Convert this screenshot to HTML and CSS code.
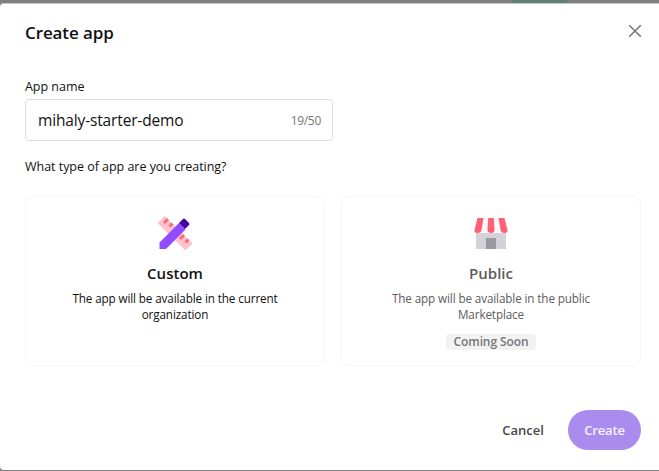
FILE: index.html
```html
<!DOCTYPE html>
<html lang="en">
<head>
<meta charset="utf-8">
<title>Create app</title>
<link rel="stylesheet" href="styles.css">
</head>
<body>
<div class="backdrop"><div class="backdrop-button"></div></div>
<main class="modal">
  <header class="modal-header">
    <h1 class="title">Create app</h1>
    <button class="close" aria-label="Close">
      <svg width="14" height="14" viewBox="0 0 14 14"><path d="M1.200 1.200l11.600 11.600M12.800 1.200L1.200 12.800" stroke="#777" stroke-width="1.6" fill="none"/></svg>
    </button>
  </header>
  <label class="label name-label">App name</label>
  <div class="field">
    <span class="value">mihaly-starter-demo</span>
    <span class="count">19/50</span>
  </div>
  <p class="label question">What type of app are you creating?</p>
  <div class="cards">
    <section class="card">
      <svg class="icon" width="36" height="36" viewBox="0 0 36 36">
        <path d="M0.500 8L7.500 1L35.500 28.500L28.500 35.500Z" fill="#ffc4cb"/>
        <path d="M7 8l4-4M12.500 11.500l3-3M23 24l4-4M28.500 27.500l3-3" stroke="#ff6678" stroke-width="2.8"/>
        <path d="M2.500 27.500L22 8L28.500 14.500L9 34H2.500Z" fill="#914cff"/>
        <path d="M22 8L26 4Q27 3 28 4L32 8Q33 9 32 10L28 14Z" fill="#4500a6"/>
      </svg>
      <h2 class="card-title">Custom</h2>
      <p class="description">The app will be available in the current<br>organization</p>
    </section>
    <section class="card disabled">
      <svg class="icon" width="36" height="36" viewBox="0 0 36 36">
        <path d="M3 15H33V34H3Z" fill="#d3d2d9"/>
        <path d="M13 23H23V34H13Z" fill="#9a99a2"/>
        <path d="M4.500 3H31.500L35 15Q35 18 32 18H4Q1 18 1 15Z" fill="#fff6f7"/>
        <path d="M4.500 3H10.500L8.500 15Q8 18 4.500 18Q1 18 1.500 15ZM15.200 3H20.800L21.500 15Q21.500 18 18 18Q14.500 18 14.500 15ZM25.500 3H31.500L34.500 15Q35 18 31.500 18Q28 18 27.500 15Z" fill="#ff6075"/>
      </svg>
      <h2 class="card-title public">Public</h2>
      <p class="description">The app will be available in the public<br>Marketplace</p>
      <span class="tag">Coming Soon</span>
    </section>
  </div>
  <footer class="actions">
    <button class="cancel">Cancel</button>
    <button class="create">Create</button>
  </footer>
</main>
</body>
</html>
```
FILE: styles.css
```css
* { box-sizing: border-box; }
html, body { height: 100%; }
body {
  margin: 0;
  overflow: hidden;
  background: #808080;
  color: #111;
  font-family: "Open Sans", "Noto Sans", sans-serif;
}
h1, h2, p { margin: 0; }
button { border: 0; padding: 0; background: none; font: inherit; color: inherit; letter-spacing: inherit; }
.backdrop { height: 3px; padding-left: 511px; }
.backdrop-button { width: 57px; height: 3px; background: #5f8073; border-radius: 0 0 4px 4px; }
.modal {
  height: 467px;
  padding: 0 18px 0 25px;
  background: #fff;
  border-radius: 4px 0 0 4px;
  border-top: 1px solid #c8c8c8;
}
.modal-header { height: 71px; padding-top: 17px; display: flex; justify-content: space-between; align-items: flex-start; }
.title { font-size: 17px; line-height: 24px; font-weight: 580; letter-spacing: -.1px; }
.close { width: 14px; height: 14px; margin: 3px -1px 0 0; }
.close svg { display: block; }
.label { display: block; font-size: 12.5px; line-height: 18px; letter-spacing: -.03px; }
.name-label { padding-top: 3px; height: 24px; }
.field {
  width: 308px; height: 42px;
  padding: 0 11px 0 12px;
  border: 1px solid #dedede;
  border-radius: 4px;
  display: flex; align-items: center; justify-content: space-between;
}
.value { font-size: 15.5px; letter-spacing: -.15px; }
.count { font-size: 12px; color: #777; letter-spacing: -.3px; }
.question { margin-top: 17px; }
.cards { display: grid; grid-template-columns: 300px 300px; gap: 16px; margin-top: 20px; }
.card {
  height: 170px; padding-top: 18px;
  border: 1px solid #f5f5f5; border-radius: 8px;
  display: flex; flex-direction: column; align-items: center;
  text-align: center;
}
.icon { flex: none; }
.card-title { margin-top: 11px; font-size: 15px; line-height: 22px; font-weight: 580; letter-spacing: .02px; }
.description { margin-top: 6px; font-size: 11.7px; line-height: 16px; letter-spacing: -.12px; white-space: nowrap; }
.disabled { color: #5d5d5d; }
.tag { margin-top: 12px; width: 90px; height: 16px; border-radius: 4px; background: #f2f2f2; color: #777; font-size: 12px; line-height: 16px; font-weight: 580; letter-spacing: -.1px; }
.actions { margin-top: 44px; display: flex; justify-content: flex-end; align-items: center; gap: 24px; font-size: 13px; font-weight: 560; letter-spacing: 0; }
.cancel { width: 42px; color: #484848; white-space: nowrap; }
.create { width: 73px; height: 40px; border-radius: 20px; background: #a98cee; color: #f7f2ff; font-weight: 650; letter-spacing: -.15px; }
```
